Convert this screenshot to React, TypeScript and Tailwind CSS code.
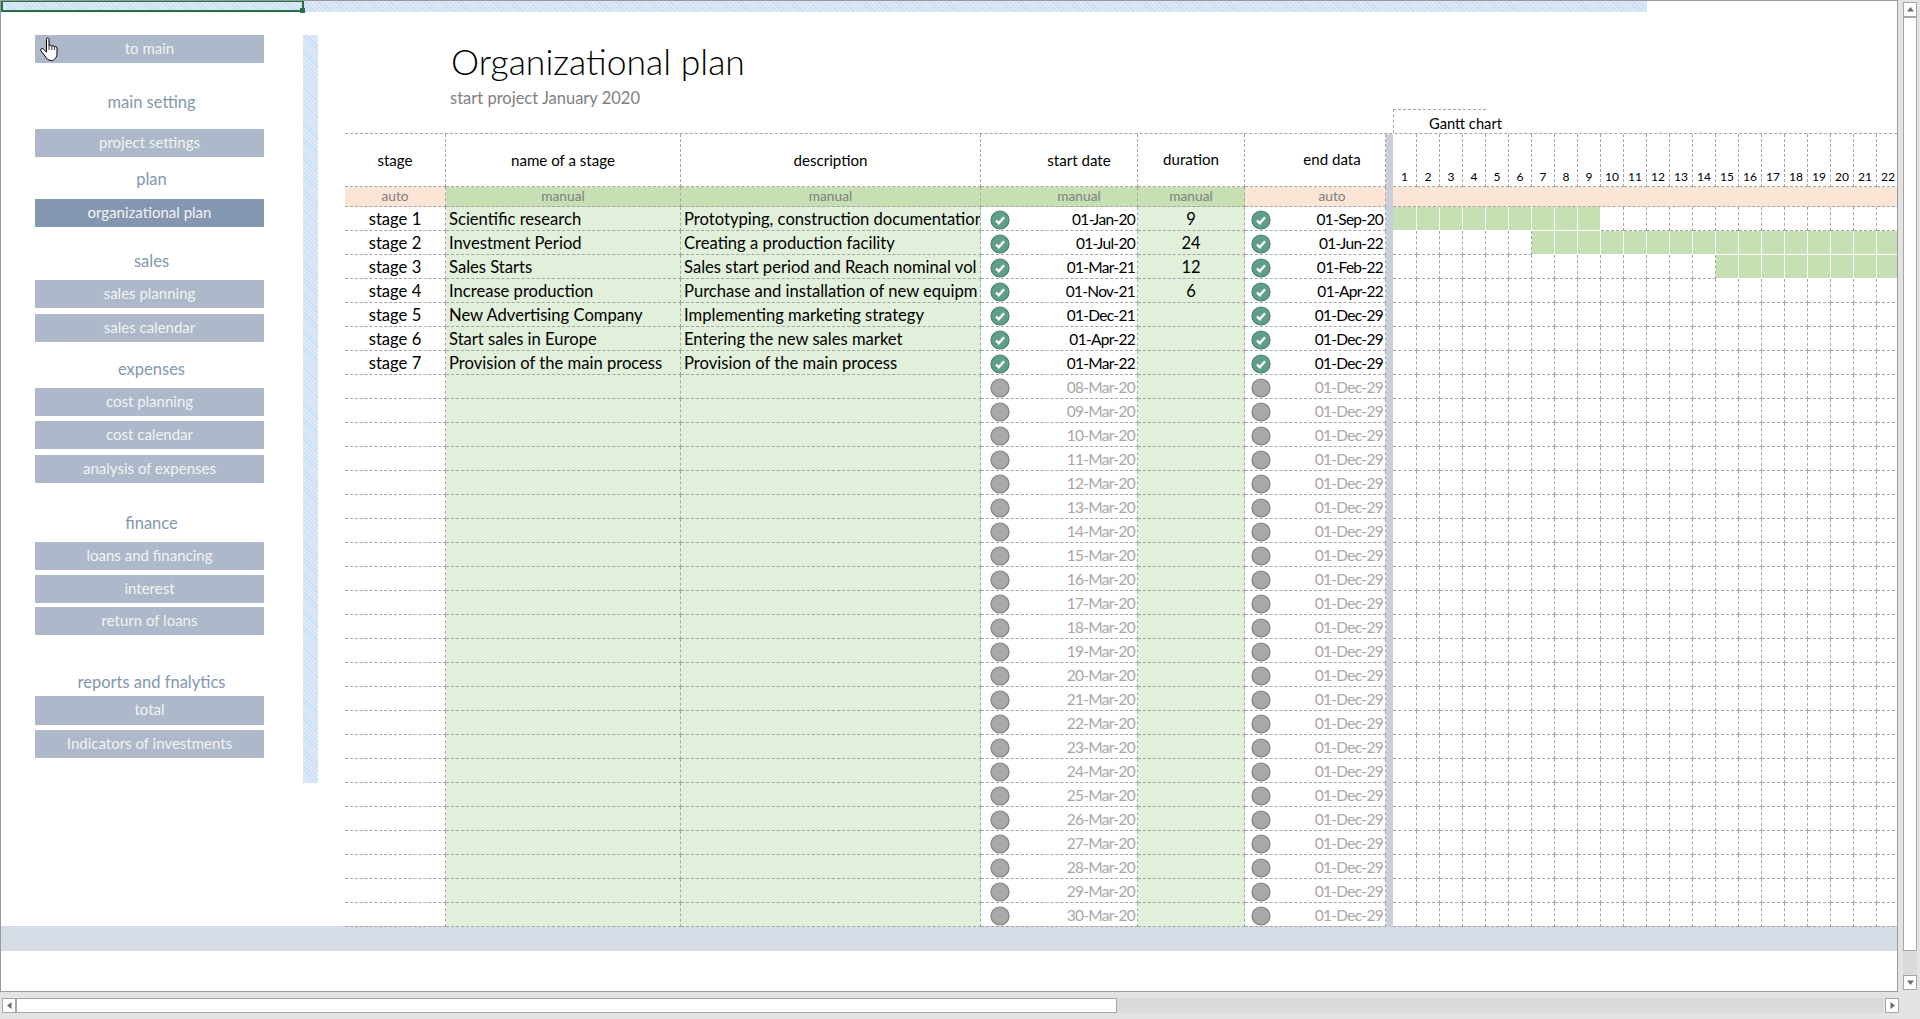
const DASH = 'border-dashed border-[#a6a6a6]';
const COLS = 'grid grid-cols-[101px_235px_300px_157px_107px_141px_7px_24px_repeat(21,23px)]';
const HATCH = 'bg-[repeating-linear-gradient(45deg,#c8dcf3_0px,#c8dcf3_1px,#dce9f7_1px,#dce9f7_3px)]';

const menu = [
  { kind: 'btn', text: 'to main', cls: 'mt-0 h-[28px]' },
  { kind: 'label', text: 'main setting', cls: 'mt-[25px]' },
  { kind: 'btn', text: 'project settings', cls: 'mt-[13px] h-[28px]' },
  { kind: 'label', text: 'plan', cls: 'mt-[8px]' },
  { kind: 'active', text: 'organizational plan', cls: 'mt-[6px] h-[28px]' },
  { kind: 'label', text: 'sales', cls: 'mt-[20px]' },
  { kind: 'btn', text: 'sales planning', cls: 'mt-[5px] h-[28px]' },
  { kind: 'btn', text: 'sales calendar', cls: 'mt-[6px] h-[28px]' },
  { kind: 'label', text: 'expenses', cls: 'mt-[13px]' },
  { kind: 'btn', text: 'cost planning', cls: 'mt-[5px] h-[28px]' },
  { kind: 'btn', text: 'cost calendar', cls: 'mt-[5px] h-[28px]' },
  { kind: 'btn', text: 'analysis of expenses', cls: 'mt-[6px] h-[28px]' },
  { kind: 'label', text: 'finance', cls: 'mt-[26px]' },
  { kind: 'btn', text: 'loans and financing', cls: 'mt-[5px] h-[28px]' },
  { kind: 'btn', text: 'interest', cls: 'mt-[5px] h-[28px]' },
  { kind: 'btn', text: 'return of loans', cls: 'mt-[4px] h-[28px]' },
  { kind: 'label', text: 'reports and fnalytics', cls: 'mt-[33px]' },
  { kind: 'btn', text: 'total', cls: 'mt-0 h-[29px]' },
  { kind: 'btn', text: 'Indicators of investments', cls: 'mt-[5px] h-[28px]' },
];

const stages = [
  { name: 'Scientific research', desc: 'Prototyping, construction documentation', start: '01-Jan-20', dur: '9', end: '01-Sep-20', from: 1, to: 9 },
  { name: 'Investment Period', desc: 'Creating a production facility', start: '01-Jul-20', dur: '24', end: '01-Jun-22', from: 7, to: 22 },
  { name: 'Sales Starts', desc: 'Sales start period and Reach nominal vol', start: '01-Mar-21', dur: '12', end: '01-Feb-22', from: 15, to: 22 },
  { name: 'Increase production', desc: 'Purchase and installation of new equipm', start: '01-Nov-21', dur: '6', end: '01-Apr-22', from: 0, to: 0 },
  { name: 'New Advertising Company', desc: 'Implementing marketing strategy', start: '01-Dec-21', dur: '', end: '01-Dec-29', from: 0, to: 0 },
  { name: 'Start sales in Europe', desc: 'Entering the new sales market', start: '01-Apr-22', dur: '', end: '01-Dec-29', from: 0, to: 0 },
  { name: 'Provision of the main process', desc: 'Provision of the main process', start: '01-Mar-22', dur: '', end: '01-Dec-29', from: 0, to: 0 },
];

const days = Array.from({ length: 22 }, (_, i) => i + 1);
const emptyRows = Array.from({ length: 23 }, (_, i) => `${String(i + 8).padStart(2, '0')}-Mar-20`);

function StatusIcon({ done }: { done: boolean }) {
  return (
    <svg width="20" height="20" viewBox="0 0 20 20" className="shrink-0">
      <circle cx="10" cy="10" r="9" fill={done ? '#5f9e87' : '#a8a8a8'} stroke={done ? '#4b806d' : '#7f7f7f'} strokeWidth="1.2" />
      {done && <path d="M6 10.5 L8.8 13.2 L14 7.2" fill="none" stroke="#ffffff" strokeWidth="2.4" />}
    </svg>
  );
}

function HandCursor() {
  return (
    <svg width="20" height="25" viewBox="0 0 20 25" className="absolute left-[40px] top-[37px]">
      <path
        d="M6.5 2.5 C6.5 .6 9 .6 9 2.5 V9 C9.5 7.8 11.5 7.8 11.8 9.3 C12.3 8.3 14.2 8.5 14.4 10 C15 9.2 17 9.4 17 11.2 V16 C17 20 15 23.5 11 23.5 C8 23.5 6.5 21.5 5 19 L1 14 C-.2 12.3 1.8 10.8 3.2 12 L6.5 15 Z"
        fill="#ffffff"
        stroke="#000000"
        strokeWidth="1"
      />
      <path d="M9 9 V13 M11.8 9.3 V13 M14.4 10 V13" fill="none" stroke="#000000" strokeWidth="0.8" />
    </svg>
  );
}

function Arrow({ points }: { points: string }) {
  return (
    <svg width="9" height="9" viewBox="0 0 9 9">
      <polygon points={points} fill="#6b6b6b" />
    </svg>
  );
}

function ScrollButton({ points }: { points: string }) {
  return (
    <div className="flex h-[15px] w-[14px] shrink-0 items-center justify-center border border-[#a6a6a6] bg-white">
      <Arrow points={points} />
    </div>
  );
}

function Sidebar() {
  return (
    <div className="flex w-[302px] shrink-0 flex-col pl-[34px] pt-[23px]">
      {menu.map((m) =>
        m.kind === 'label' ? (
          <div key={m.text} className={`${m.cls} flex h-[28px] w-[233px] items-center justify-center text-[16.5px] text-[#8497b0]`}>
            {m.text}
          </div>
        ) : (
          <div
            key={m.text}
            className={`${m.cls} flex w-[229px] items-center justify-center pb-[2px] text-[15px] text-[#f2f2f2] ${m.kind === 'active' ? 'bg-[#8497b0]' : 'bg-[#adb9ca]'}`}
          >
            {m.text}
          </div>
        ),
      )}
    </div>
  );
}

function DayCells({ from, to }: { from: number; to: number }) {
  return (
    <>
      {days.map((d) => (
        <div
          key={d}
          className={d >= from && d <= to && from > 0 ? 'border-r border-b border-white bg-[#c6e0b4]' : `border-r border-b ${DASH}`}
        />
      ))}
    </>
  );
}

function DateText({ value }: { value: string }) {
  return <span className="mt-px text-[15.5px] tracking-[-0.7px]">{value}</span>;
}

function Table() {
  const cell = `border-r border-b ${DASH} flex items-center overflow-hidden whitespace-nowrap`;
  const body = `${cell} pt-[2px]`;
  const green = 'bg-[#e2efda]';
  return (
    <div className="relative z-10 w-[1552px] overflow-hidden text-black">
      <div className="ml-[1048px] flex h-[24px] w-[93px] items-center whitespace-nowrap border-t border-l border-dashed border-[#a6a6a6] pl-[35px] text-[14.7px]">
        <span className="mt-[3px]">Gantt chart</span>
      </div>

      {/* header */}
      <div className={`${COLS} h-[54px] border-t ${DASH} text-[15.1px]`}>
        <div className={`${cell} justify-center`}>stage</div>
        <div className={`${cell} justify-center`}>name of a stage</div>
        <div className={`${cell} justify-center`}>description</div>
        <div className={`${cell} justify-center pl-[40px]`}>start date</div>
        <div className={`${cell} justify-center pb-[2px]`}>duration</div>
        <div className={`${cell} justify-center pb-[2px] pl-[34px]`}>end data</div>
        <div className="bg-[#c9ced9]" />
        {days.map((d) => (
          <div key={d} className={`border-r border-b ${DASH} flex items-end justify-center text-[12px]`}>
            {d}
          </div>
        ))}
      </div>

      {/* auto / manual row */}
      <div className={`${COLS} h-[20px] text-[13.7px] text-[#7f7f7f]`}>
        <div className={`${cell} justify-center bg-[#fce4d6]`}>auto</div>
        <div className={`${cell} justify-center bg-[#c6e0b4]`}>manual</div>
        <div className={`${cell} justify-center bg-[#c6e0b4]`}>manual</div>
        <div className={`${cell} justify-center bg-[#c6e0b4] pl-[40px]`}>manual</div>
        <div className={`${cell} justify-center bg-[#c6e0b4]`}>manual</div>
        <div className={`${cell} justify-center bg-[#fce4d6] pl-[34px]`}>auto</div>
        <div className="bg-[#c9ced9]" />
        <div className={`col-span-22 border-b ${DASH} bg-[#fce4d6]`} />
      </div>

      {/* stages */}
      {stages.map((s, i) => (
        <div key={s.name + i} className={`${COLS} h-[24px] text-[16.6px]`}>
          <div className={`${body} justify-center`}>stage {i + 1}</div>
          <div className={`${body} ${green} pl-[3px]`}>{s.name}</div>
          <div className={`${body} ${green} pl-[3px]`}>{s.desc}</div>
          <div className={`${body} justify-between pl-[9px] pr-[2px]`}>
            <StatusIcon done />
            <DateText value={s.start} />
          </div>
          <div className={`${body} ${green} justify-center text-[16.5px]`}>{s.dur}</div>
          <div className={`${body} justify-between pl-[6px] pr-[2px]`}>
            <StatusIcon done />
            <DateText value={s.end} />
          </div>
          <div className="bg-[#c9ced9]" />
          <DayCells from={s.from} to={s.to} />
        </div>
      ))}

      {/* not filled yet */}
      {emptyRows.map((date) => (
        <div key={date} className={`${COLS} h-[24px] text-[#aba6a6]`}>
          <div className={cell} />
          <div className={`${cell} ${green}`} />
          <div className={`${cell} ${green}`} />
          <div className={`${body} justify-between pl-[9px] pr-[2px]`}>
            <StatusIcon done={false} />
            <DateText value={date} />
          </div>
          <div className={`${cell} ${green}`} />
          <div className={`${body} justify-between pl-[6px] pr-[2px]`}>
            <StatusIcon done={false} />
            <DateText value="01-Dec-29" />
          </div>
          <div className="bg-[#c9ced9]" />
          <DayCells from={0} to={0} />
        </div>
      ))}
    </div>
  );
}

export default function App() {
  return (
    <div className="relative h-[1019px] w-[1920px] overflow-hidden bg-[#e3e3e3] font-[Lato,sans-serif]">
      <div className="flex">
        {/* sheet */}
        <div className="h-[992px] w-[1898px] overflow-hidden border border-[#9a9a9a] bg-white">
          <div className={`${HATCH} flex h-[11px] w-[1646px]`}>
            <div className="relative h-[11px] w-[303px] border-2 border-t border-[#217346]">
              <div className="absolute -bottom-[3px] -right-[3px] h-[5px] w-[5px] bg-[#217346]" />
            </div>
          </div>

          <div className="flex h-[915px]">
            <Sidebar />
            <div className={`${HATCH} mt-[23px] h-[748px] w-[15px] shrink-0`} />
            <div className="ml-[27px] flex flex-col">
              <div className="h-[97px] pl-[105px] pt-[30px]">
                <div className="ml-px text-[35.5px] font-light leading-[40px] text-black">Organizational plan</div>
                <div className="mt-[6px] text-[16.5px] leading-[20px] text-[#7f7f7f]">start project January 2020</div>
              </div>
              <Table />
            </div>
          </div>

          <div className="-mt-px h-[25px] bg-[#d6dce5]" />
        </div>

        {/* vertical scrollbar */}
        <div className="ml-[5px] flex h-[990px] w-[14px] flex-col pt-[2px]">
          <ScrollButton points="4.5,2 8,6.5 1,6.5" />
          <div className="h-[934px] border border-[#a6a6a6] bg-white" />
          <div className="h-[24px] bg-[#dadada]" />
          <ScrollButton points="1,2.5 8,2.5 4.5,7" />
        </div>
      </div>

      {/* horizontal scrollbar */}
      <div className="mt-[6px] flex h-[15px] w-[1899px] pl-[2px]">
        <ScrollButton points="2,4.5 6.5,1 6.5,8" />
        <div className="w-[1102px] border border-[#a6a6a6] bg-white" />
        <div className="w-[767px] bg-[#dadada]" />
        <div className="ml-[2px]">
          <ScrollButton points="7,4.5 2.5,1 2.5,8" />
        </div>
      </div>

      <HandCursor />
    </div>
  );
}
